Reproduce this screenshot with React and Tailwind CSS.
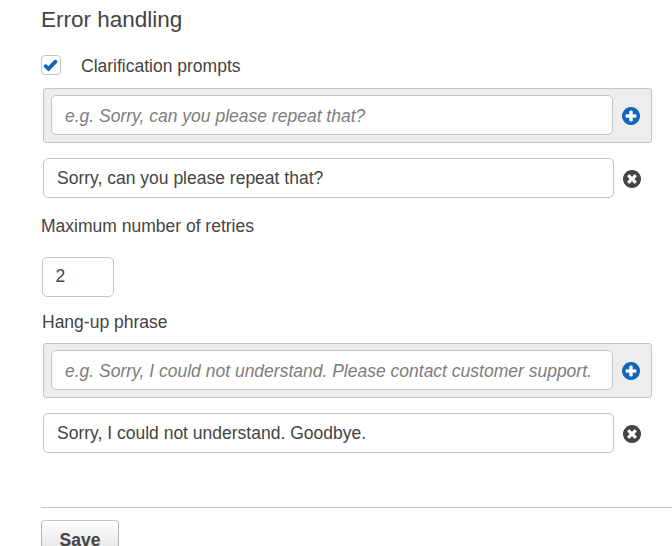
import React from "react";

const DISC =
  "M1664 896q0 209-103 385.5t-279.5 279.5-385.5 103-385.5-103-279.5-279.5-103-385.5 103-385.5 279.5-279.5 385.5-103 385.5 103 279.5 279.5 103 385.5z";
const PLUS =
  "M1344 960v-128q0-26-19-45t-45-19h-256v-256q0-26-19-45t-45-19h-128q-26 0-45 19t-19 45v256h-256q-26 0-45 19t-19 45v128q0 26 19 45t45 19h256v256q0 26 19 45t45 19h128q26 0 45-19t19-45v-256h256q26 0 45-19t19-45z";
const TIMES =
  "M1277 1122q0-26-19-45l-181-181 181-181q19-19 19-45 0-27-19-46l-90-90q-19-19-46-19-26 0-45 19l-181 181-181-181q-19-19-45-19-27 0-46 19l-90 90q-19 19-19 46 0 26 19 45l181 181-181 181q-19 19-19 45 0 27 19 46l90 90q19 19 46 19 26 0 45-19l181-181 181 181q19 19 45 19 27 0 46-19l90-90q19-19 19-46z";

function CircleButton({ label, mark, className }) {
  return (
    <button type="button" aria-label={label} className={`size-[18px] shrink-0 ${className}`}>
      <svg viewBox="128 128 1536 1536" className="block size-full" fill="currentColor">
        <path d={DISC} />
        <path d={mark} fill="#fff" stroke="#fff" strokeWidth="30" />
      </svg>
    </button>
  );
}

function PhraseEditor({ placeholder, value }) {
  return (
    <div className="ml-[2px]">
      <div className="flex h-[55px] w-[609px] items-start rounded-[3px] border border-[#c4c4c4] bg-[#ededed] pt-[6px] pl-[7px]">
        <input
          placeholder={placeholder}
          className="h-10 w-[562px] rounded-[5px] border border-[#c4c4c4] bg-white px-[13px] pt-[2px] outline-none placeholder:text-[#7d7d7d] placeholder:italic placeholder:opacity-100"
        />
        <CircleButton label="Add" mark={PLUS} className="mt-[12px] ml-[8.5px] text-[#1166bb]" />
      </div>
      <div className="mt-[15px] flex h-10 items-center">
        <input
          defaultValue={value}
          className="h-10 w-[571px] rounded-[5px] border border-[#c4c4c4] bg-white px-[13px] outline-none"
        />
        <CircleButton label="Remove" mark={TIMES} className="mt-px ml-[9px] text-[#444444]" />
      </div>
    </div>
  );
}

export default function App() {
  return (
    <main className="h-[546px] overflow-hidden bg-white pl-[41px] font-['Liberation_Sans',Arial,sans-serif] text-[17.5px] text-[#444444]">
      <h1 className="h-[55px] pt-[6px] text-[22.5px] leading-[28px]">Error handling</h1>
      <label className="flex h-[33px] items-start">
        <span className="size-5 rounded-[4px] border border-[#c4c4c4] text-[#1166bb]">
          <svg
            viewBox="0 0 18 18"
            className="block size-[18px]"
            fill="none"
            stroke="currentColor"
            strokeWidth="3.8"
            strokeLinecap="round"
          >
            <path d="M3.6 10.2 6.5 12.8 13.5 5.7" />
          </svg>
        </span>
        <span className="ml-5 leading-[22px]">Clarification prompts</span>
      </label>
      <PhraseEditor
        placeholder="e.g. Sorry, can you please repeat that?"
        value="Sorry, can you please repeat that?"
      />
      <div className="mt-[17px] h-[42px] leading-[22px]">Maximum number of retries</div>
      <input
        defaultValue="2"
        className="ml-px block h-10 w-[72px] rounded-[5px] border border-[#c4c4c4] bg-white px-[12.5px] pb-px outline-none"
      />
      <div className="mt-[14px] ml-px h-[32px] leading-[22px]">Hang-up phrase</div>
      <PhraseEditor
        placeholder="e.g. Sorry, I could not understand. Please contact customer support."
        value="Sorry, I could not understand. Goodbye."
      />
      <hr className="mt-[54px] border-[#c4c4c4]" />
      <button
        type="button"
        className="mt-[12px] block h-10 w-[78px] rounded-[4px] border border-[#b5b5b5] border-t-[#c8c8c8] bg-linear-to-b from-white to-[#dddddd] font-bold"
      >
        Save
      </button>
    </main>
  );
}
